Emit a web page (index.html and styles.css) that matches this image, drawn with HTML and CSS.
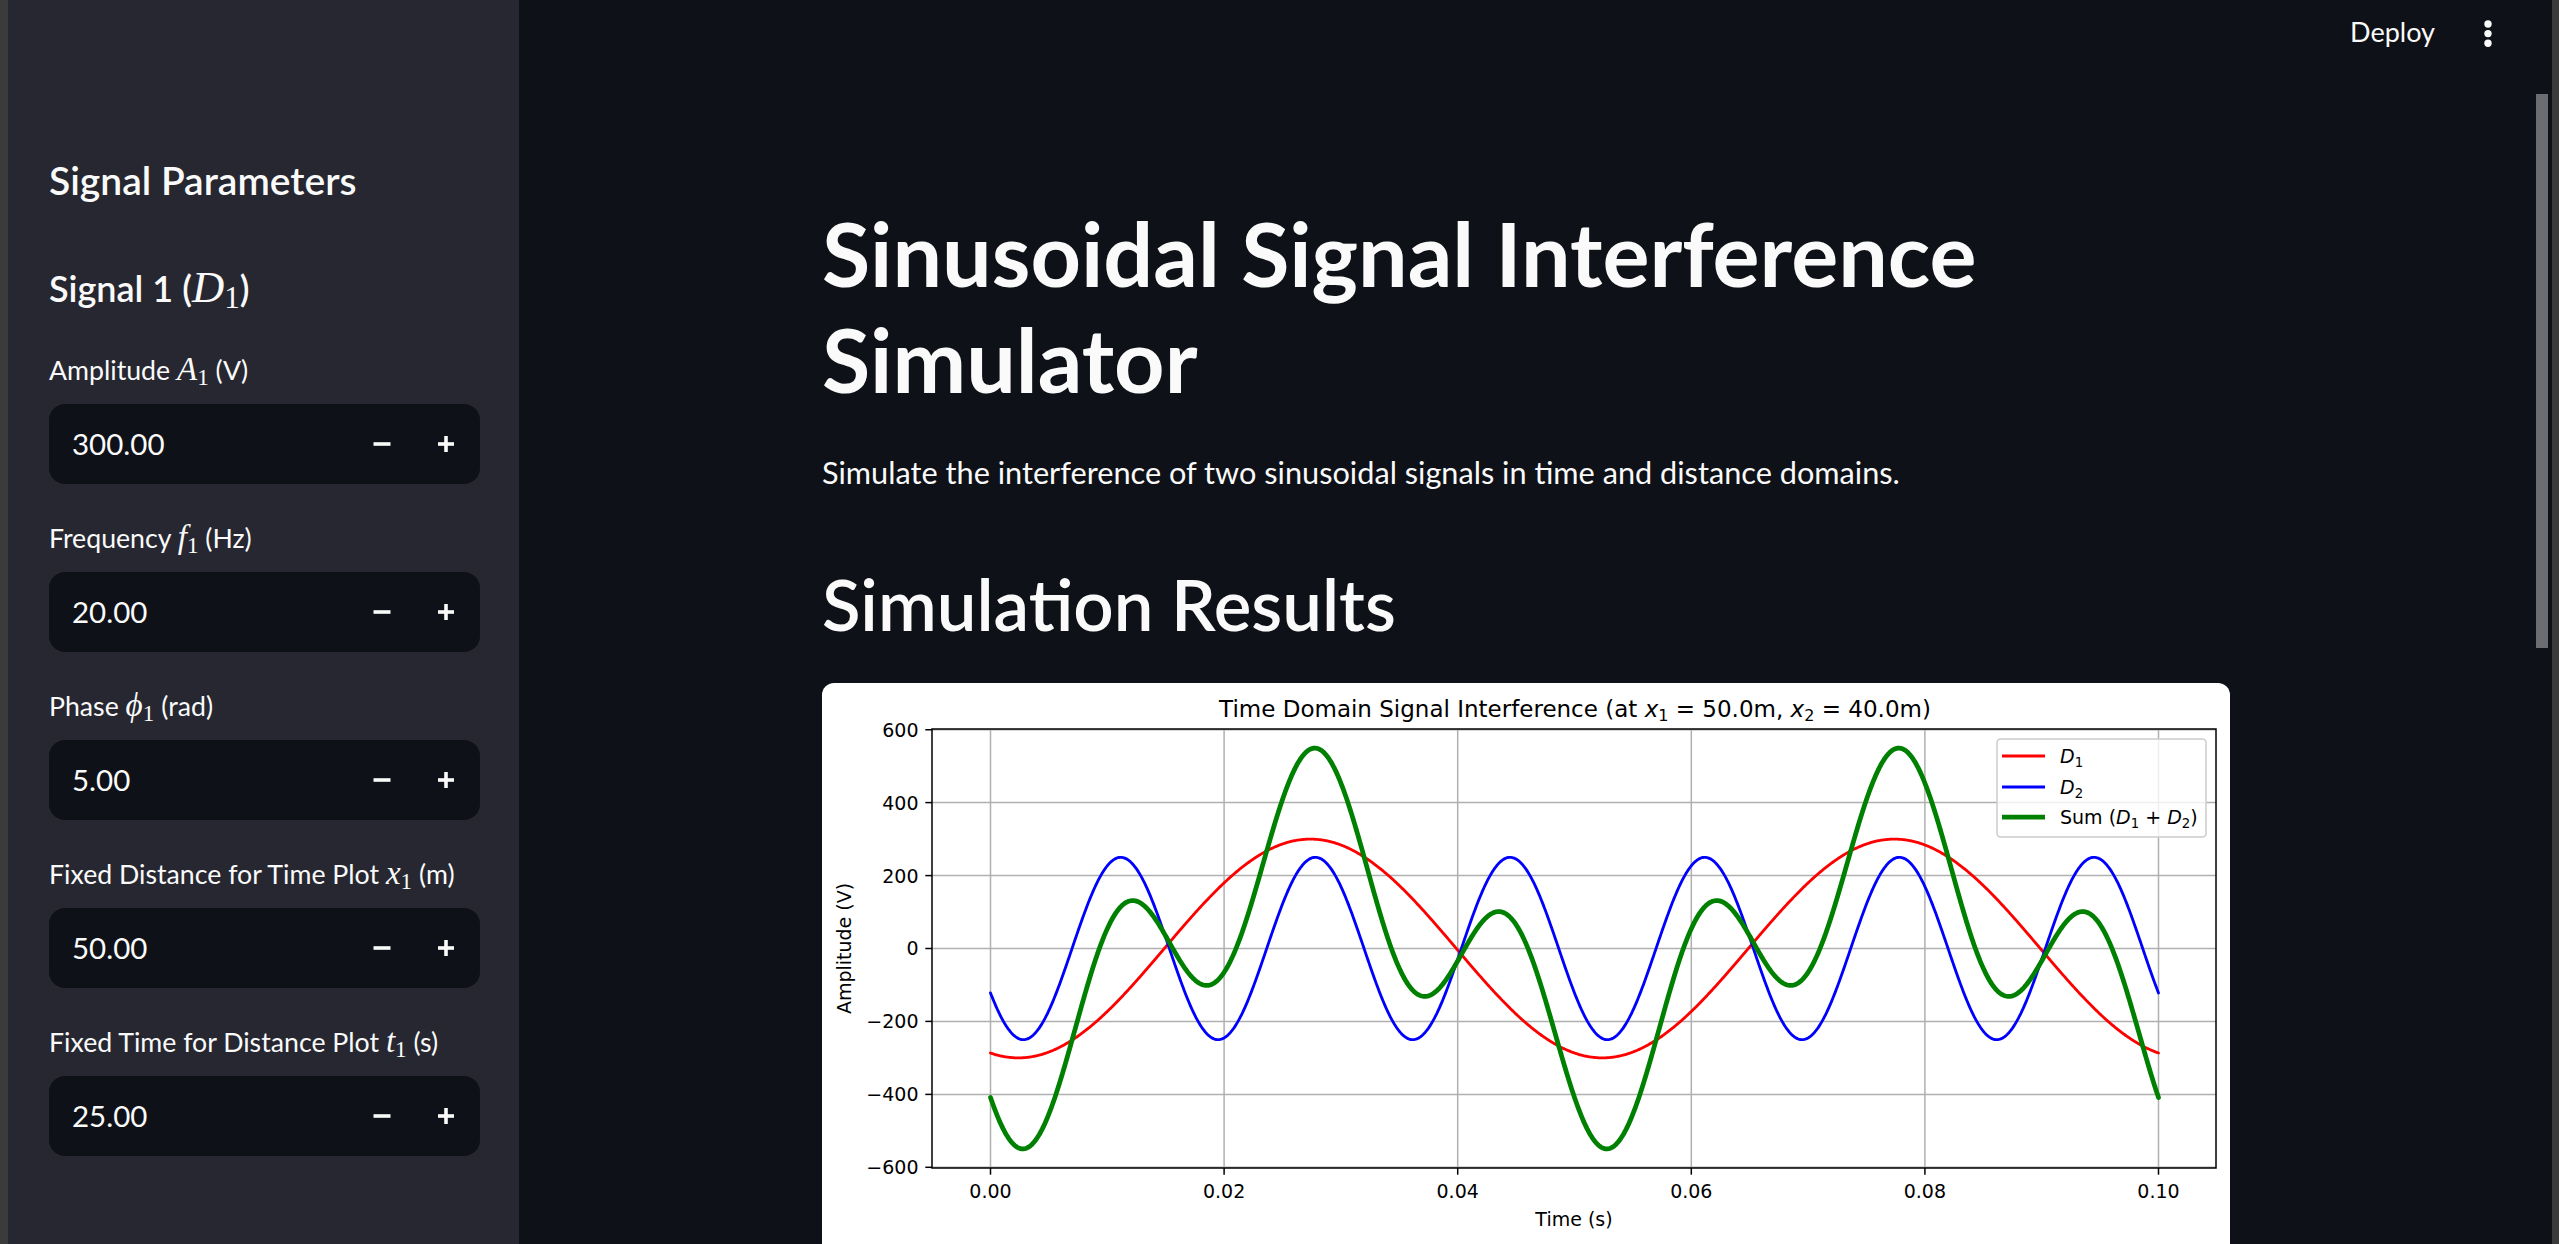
FILE: index.html
```html
<!DOCTYPE html>
<html lang="en">
<head>
<meta charset="utf-8">
<title>Sinusoidal Signal Interference Simulator</title>
<link rel="stylesheet" href="styles.css">
</head>
<body>
<div class="app">
  <div class="edge"></div>
  <aside class="sidebar">
    <h2 class="sb-title">Signal Parameters</h2>
    <h3 class="sb-sub">Signal 1 (<span class="m"><i>D</i><sub>1</sub></span>)</h3>
    <div class="widgets">
      <div class="widget">
        <div class="wlabel">Amplitude <span class="m"><i>A</i><sub>1</sub></span> (V)</div>
        <div class="num">
          <span class="val">300.00</span>
          <span class="step"><svg width="18" height="18" viewBox="0 0 18 18"><rect x="0.5" y="7.2" width="17" height="3.6" fill="#fafafa"/></svg></span>
          <span class="step"><svg width="18" height="18" viewBox="0 0 18 18"><rect x="1" y="7.2" width="16" height="3.6" fill="#fafafa"/><rect x="7.2" y="1" width="3.6" height="16" fill="#fafafa"/></svg></span>
        </div>
      </div>
      <div class="widget">
        <div class="wlabel">Frequency <span class="m"><i>f</i><sub>1</sub></span> (Hz)</div>
        <div class="num">
          <span class="val">20.00</span>
          <span class="step"><svg width="18" height="18" viewBox="0 0 18 18"><rect x="0.5" y="7.2" width="17" height="3.6" fill="#fafafa"/></svg></span>
          <span class="step"><svg width="18" height="18" viewBox="0 0 18 18"><rect x="1" y="7.2" width="16" height="3.6" fill="#fafafa"/><rect x="7.2" y="1" width="3.6" height="16" fill="#fafafa"/></svg></span>
        </div>
      </div>
      <div class="widget">
        <div class="wlabel">Phase <span class="m"><i>ϕ</i><sub>1</sub></span> (rad)</div>
        <div class="num">
          <span class="val">5.00</span>
          <span class="step"><svg width="18" height="18" viewBox="0 0 18 18"><rect x="0.5" y="7.2" width="17" height="3.6" fill="#fafafa"/></svg></span>
          <span class="step"><svg width="18" height="18" viewBox="0 0 18 18"><rect x="1" y="7.2" width="16" height="3.6" fill="#fafafa"/><rect x="7.2" y="1" width="3.6" height="16" fill="#fafafa"/></svg></span>
        </div>
      </div>
      <div class="widget">
        <div class="wlabel">Fixed Distance for Time Plot <span class="m"><i>x</i><sub>1</sub></span> (m)</div>
        <div class="num">
          <span class="val">50.00</span>
          <span class="step"><svg width="18" height="18" viewBox="0 0 18 18"><rect x="0.5" y="7.2" width="17" height="3.6" fill="#fafafa"/></svg></span>
          <span class="step"><svg width="18" height="18" viewBox="0 0 18 18"><rect x="1" y="7.2" width="16" height="3.6" fill="#fafafa"/><rect x="7.2" y="1" width="3.6" height="16" fill="#fafafa"/></svg></span>
        </div>
      </div>
      <div class="widget">
        <div class="wlabel">Fixed Time for Distance Plot <span class="m"><i>t</i><sub>1</sub></span> (s)</div>
        <div class="num">
          <span class="val">25.00</span>
          <span class="step"><svg width="18" height="18" viewBox="0 0 18 18"><rect x="0.5" y="7.2" width="17" height="3.6" fill="#fafafa"/></svg></span>
          <span class="step"><svg width="18" height="18" viewBox="0 0 18 18"><rect x="1" y="7.2" width="16" height="3.6" fill="#fafafa"/><rect x="7.2" y="1" width="3.6" height="16" fill="#fafafa"/></svg></span>
        </div>
      </div>
    </div>
  </aside>
  <main class="main">
    <header class="top">
      <span class="deploy">Deploy</span>
      <svg class="kebab" width="32" height="56" viewBox="0 0 32 56"><circle cx="16" cy="20" r="3.7" fill="#fafafa"/><circle cx="16" cy="29.6" r="3.7" fill="#fafafa"/><circle cx="16" cy="39.2" r="3.7" fill="#fafafa"/></svg>
    </header>
    <div class="block">
      <h1 class="title">Sinusoidal Signal Interference Simulator</h1>
      <p class="lead">Simulate the interference of two sinusoidal signals in time and distance domains.</p>
      <h2 class="sec">Simulation Results</h2>
      <div class="card">
        <svg class="plot" width="1408" height="580" viewBox="0 0 1408 580">
          <defs><clipPath id="ax"><rect x="110" y="46" width="1284" height="439"/></clipPath></defs>
          <text class="ptitle" x="753" y="34" text-anchor="middle">Time Domain Signal Interference (at <tspan class="mi">x</tspan><tspan font-size="16" dy="4">1</tspan><tspan dy="-4"> = 50.0m, </tspan><tspan class="mi">x</tspan><tspan font-size="16" dy="4">2</tspan><tspan dy="-4"> = 40.0m)</tspan></text>
          <g class="grid">
            <line x1="168.5" y1="46" x2="168.5" y2="485"/>
            <line x1="402.1" y1="46" x2="402.1" y2="485"/>
            <line x1="635.7" y1="46" x2="635.7" y2="485"/>
            <line x1="869.3" y1="46" x2="869.3" y2="485"/>
            <line x1="1102.9" y1="46" x2="1102.9" y2="485"/>
            <line x1="1336.5" y1="46" x2="1336.5" y2="485"/>
            <line x1="110" y1="46.7" x2="1394" y2="46.7"/>
            <line x1="110" y1="119.6" x2="1394" y2="119.6"/>
            <line x1="110" y1="192.6" x2="1394" y2="192.6"/>
            <line x1="110" y1="265.5" x2="1394" y2="265.5"/>
            <line x1="110" y1="338.4" x2="1394" y2="338.4"/>
            <line x1="110" y1="411.4" x2="1394" y2="411.4"/>
            <line x1="110" y1="484.3" x2="1394" y2="484.3"/>
          </g>
          <g clip-path="url(#ax)" fill="none" stroke-linejoin="round" stroke-linecap="round">
            <path id="c-d1" stroke="#ff0000" stroke-width="2.85"/>
            <path id="c-d2" stroke="#0000ff" stroke-width="2.85"/>
            <path id="c-sum" stroke="#008000" stroke-width="4.75"/>
          </g>
          <rect class="spine" x="110" y="46" width="1284" height="439"/>
          <g class="ticks">
            <line x1="103.3" y1="46.7" x2="110" y2="46.7"/>
            <line x1="103.3" y1="119.6" x2="110" y2="119.6"/>
            <line x1="103.3" y1="192.6" x2="110" y2="192.6"/>
            <line x1="103.3" y1="265.5" x2="110" y2="265.5"/>
            <line x1="103.3" y1="338.4" x2="110" y2="338.4"/>
            <line x1="103.3" y1="411.4" x2="110" y2="411.4"/>
            <line x1="103.3" y1="484.3" x2="110" y2="484.3"/>
            <line x1="168.5" y1="485" x2="168.5" y2="491.7"/>
            <line x1="402.1" y1="485" x2="402.1" y2="491.7"/>
            <line x1="635.7" y1="485" x2="635.7" y2="491.7"/>
            <line x1="869.3" y1="485" x2="869.3" y2="491.7"/>
            <line x1="1102.9" y1="485" x2="1102.9" y2="491.7"/>
            <line x1="1336.5" y1="485" x2="1336.5" y2="491.7"/>
          </g>
          <g class="tl" text-anchor="end">
            <text x="96.5" y="53.6">600</text>
            <text x="96.5" y="126.5">400</text>
            <text x="96.5" y="199.5">200</text>
            <text x="96.5" y="272.4">0</text>
            <text x="96.5" y="345.3">−200</text>
            <text x="96.5" y="418.3">−400</text>
            <text x="96.5" y="491.2">−600</text>
          </g>
          <g class="tl" text-anchor="middle">
            <text x="168.5" y="515">0.00</text>
            <text x="402.1" y="515">0.02</text>
            <text x="635.7" y="515">0.04</text>
            <text x="869.3" y="515">0.06</text>
            <text x="1102.9" y="515">0.08</text>
            <text x="1336.5" y="515">0.10</text>
          </g>
          <text class="tl" x="752" y="543" text-anchor="middle">Time (s)</text>
          <text class="tl" text-anchor="middle" transform="translate(29 265.5) rotate(-90)">Amplitude (V)</text>
          <g class="legend">
            <rect x="1175" y="56" width="209" height="98" rx="3.5"/>
            <line x1="1180" y1="73" x2="1223" y2="73" stroke="#ff0000" stroke-width="2.85"/>
            <line x1="1180" y1="104" x2="1223" y2="104" stroke="#0000ff" stroke-width="2.85"/>
            <line x1="1180" y1="134" x2="1223" y2="134" stroke="#008000" stroke-width="4.75"/>
            <text class="tl" x="1238" y="80"><tspan class="mi">D</tspan><tspan font-size="13.3" dy="3.5">1</tspan></text>
            <text class="tl" x="1238" y="111"><tspan class="mi">D</tspan><tspan font-size="13.3" dy="3.5">2</tspan></text>
            <text class="tl" x="1238" y="141">Sum (<tspan class="mi">D</tspan><tspan font-size="13.3" dy="3.5">1</tspan><tspan dy="-3.5"> + </tspan><tspan class="mi">D</tspan><tspan font-size="13.3" dy="3.5">2</tspan><tspan dy="-3.5">)</tspan></text>
          </g>
        </svg>
      </div>
    </div>
  </main>
  <div class="gutter"><div class="thumb"></div></div>
  <div class="edge edge-r"></div>
</div>
<script src="script.js"></script>
</body>
</html>
```

FILE: styles.css
```css
* { box-sizing: border-box; }
html, body { margin: 0; padding: 0; }
body {
  background: #0e1117;
  color: #fafafa;
  font-family: Lato, "Noto Sans", sans-serif;
}
.app { display: flex; height: 100vh; overflow: hidden; }
.edge { width: 8px; flex: none; background: #3b3b3b; }
.edge-r { width: 7px; }

/* Sidebar */
.sidebar {
  width: 511px;
  flex: none;
  background: #262730;
  padding: 155.5px 39px 0 41px;
}
.sb-title {
  margin: 0;
  font-size: 39px;
  line-height: 48px;
  font-weight: 600;
}
.sb-sub {
  margin: 63px 0 0;
  font-size: 36px;
  line-height: 43.2px;
  font-weight: 600;
}
.m {
  font-family: "Liberation Serif", "DejaVu Serif", serif;
  font-size: 1.24em;
  line-height: 0;
  font-weight: 400;
}
.m i { font-style: italic; }
.m sub {
  font-size: 0.7em;
  vertical-align: -0.2em;
  line-height: 0;
  font-style: normal;
}
.widgets {
  margin-top: 38.3px;
  display: flex;
  flex-direction: column;
  gap: 32px;
}
.wlabel {
  height: 48px;
  padding-bottom: 4px;
  margin-bottom: 8px;
  font-size: 26.7px;
  line-height: 44px;
  white-space: nowrap;
}
.num {
  height: 80px;
  border-radius: 16px;
  background: #0e1117;
  display: flex;
  align-items: center;
  padding: 0 2px 0 23px;
}
.val { flex: 1; font-size: 29.5px; line-height: 80px; }
.step {
  width: 64px;
  height: 80px;
  display: flex;
  align-items: center;
  justify-content: center;
}

/* Main */
.main {
  flex: 1;
  min-width: 0;
  padding-right: 3px;
  display: flex;
  flex-direction: column;
}
.top {
  height: 120px;
  flex: none;
  display: flex;
  justify-content: flex-end;
  align-items: flex-start;
  padding: 4px 29px 0 0;
}
.deploy { font-size: 27px; line-height: 56px; margin-right: 37px; }
.kebab { display: block; }
.block {
  width: 1408px;
  margin: 0 auto;
  padding-top: 81px;
}
.title {
  margin: 0;
  font-size: 88px;
  line-height: 105.6px;
  font-weight: 700;
}
.lead {
  margin: 35.2px 0 0;
  font-size: 30.7px;
  line-height: 51.2px;
}
.sec {
  margin: 62.7px 0 0;
  font-size: 70.8px;
  line-height: 86.4px;
  font-weight: 600;
}
.card {
  margin-top: 35.2px;
  height: 580px;
  background: #ffffff;
  border-radius: 12px;
  overflow: hidden;
}
.plot { display: block; font-family: "DejaVu Sans", sans-serif; }
.ptitle { font-size: 23px; fill: #000; }
.tl { font-size: 19px; fill: #000; }
.mi { font-style: italic; }
.grid line { stroke: #b0b0b0; stroke-width: 1.5; }
.spine { fill: none; stroke: #000; stroke-width: 1.5; }
.ticks line { stroke: #000; stroke-width: 1.5; }
.legend rect { fill: #ffffff; fill-opacity: 0.8; stroke: #cccccc; stroke-width: 1.5; }

/* Scrollbar */
.gutter { width: 16px; flex: none; padding-top: 94px; }
.thumb { width: 12px; height: 554px; background: #6c6d72; }
```

FILE: script.js
```js
(function () {
  var X0 = 168.5, XS = 11680, Y0 = 265.5, YS = 0.3646;
  function d1(t) { return 300 * Math.sin(2 * Math.PI * 20 * t - 1.87); }
  function d2(t) { return 250 * Math.sin(2 * Math.PI * 60 * t + 3.651); }
  function sum(t) { return d1(t) + d2(t); }
  function build(f) {
    var n = 1200, d = '';
    for (var i = 0; i <= n; i++) {
      var t = 0.1 * i / n;
      var x = X0 + t * XS, y = Y0 - f(t) * YS;
      d += (i ? 'L' : 'M') + x.toFixed(2) + ' ' + y.toFixed(2);
    }
    return d;
  }
  document.getElementById('c-d1').setAttribute('d', build(d1));
  document.getElementById('c-d2').setAttribute('d', build(d2));
  document.getElementById('c-sum').setAttribute('d', build(sum));
})();
```
